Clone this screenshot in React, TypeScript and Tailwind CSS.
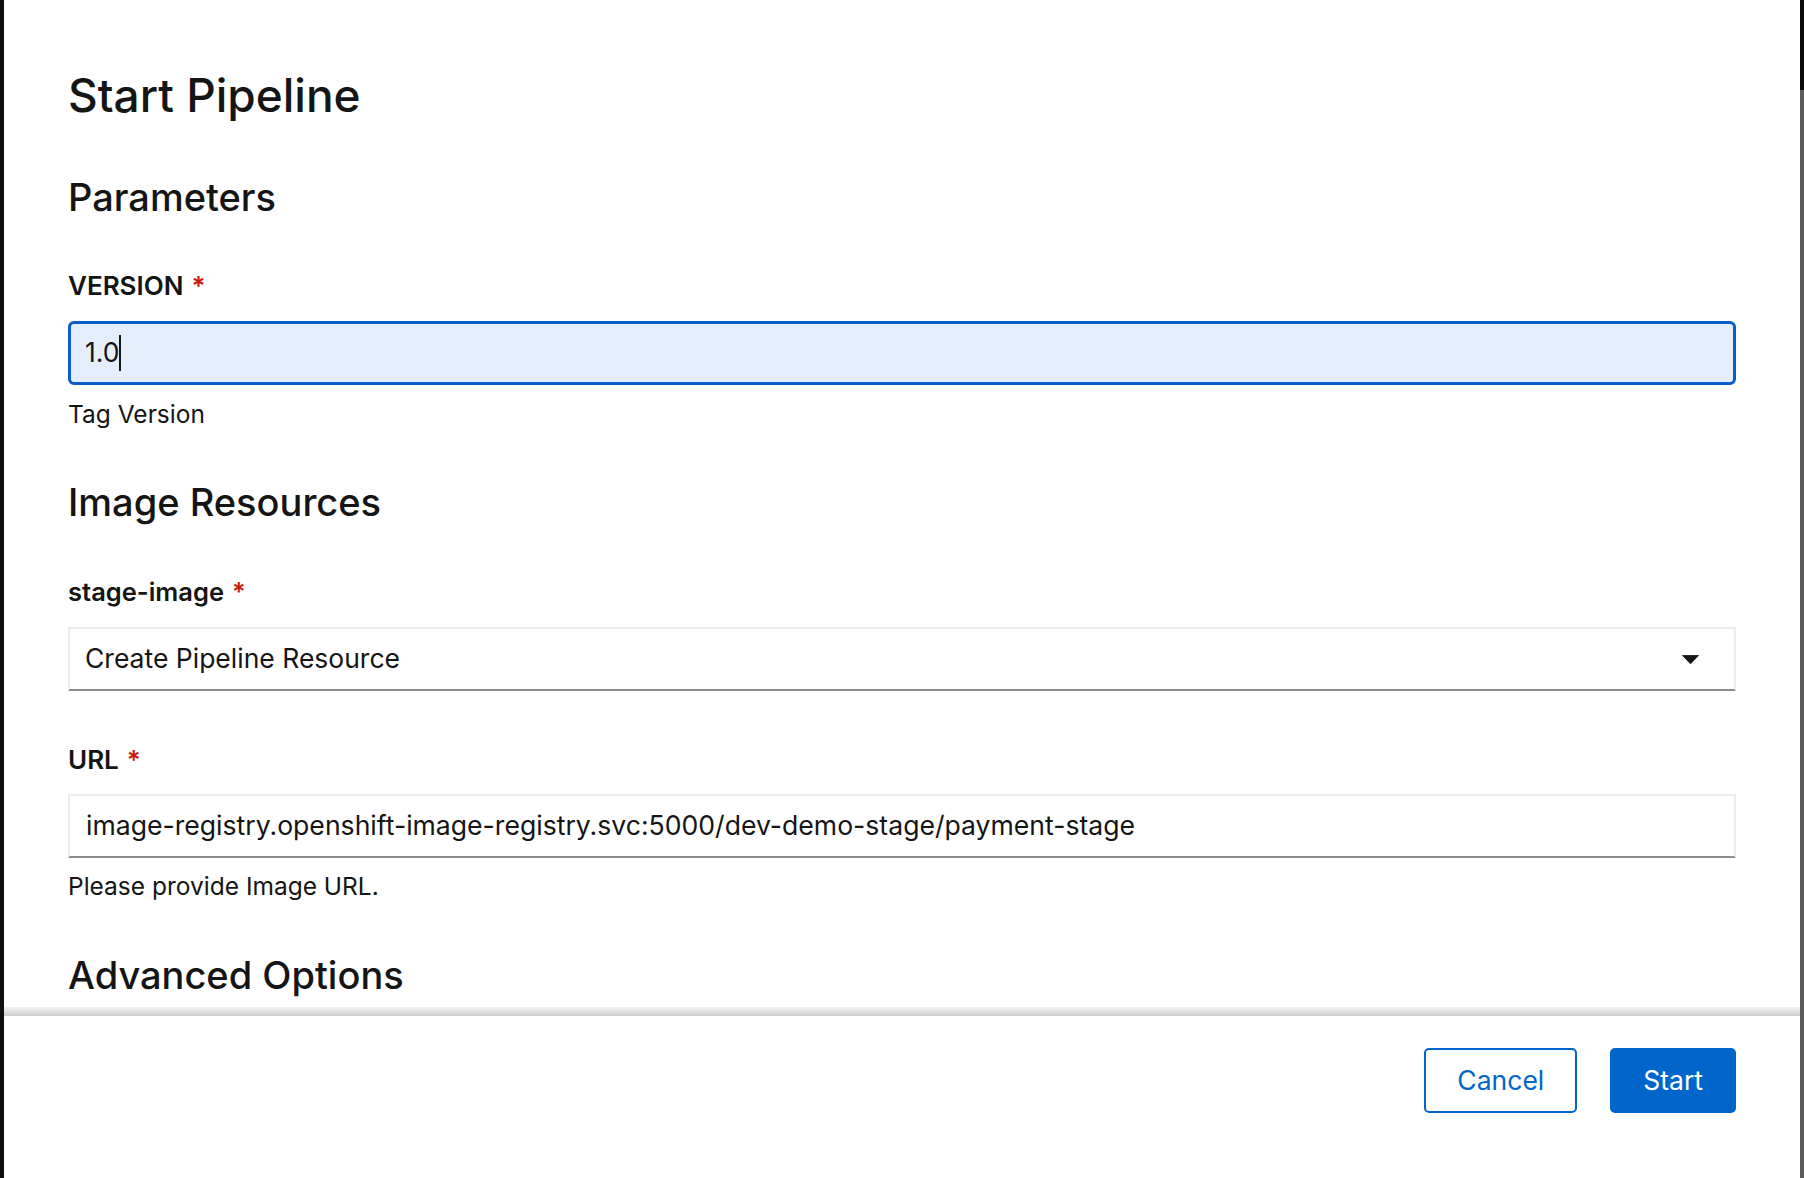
import React from "react";

function Req() {
  return <span className="ml-[8px] text-[#c9190b]">*</span>;
}

function Caret() {
  return (
    <svg width="17" height="9" viewBox="0 0 17 9" className="block">
      <path d="M0.5 0.5 H16.5 L8.5 8.8 Z" fill="#151515" stroke="#151515" strokeWidth="0.8" strokeLinejoin="round" />
    </svg>
  );
}

export default function App() {
  return (
    <div className="flex h-[1178px] w-full overflow-hidden bg-[#0f0f0f] font-['Inter',sans-serif] text-[#151515]">
      <div className="w-[4px] shrink-0 bg-[#0f0f0f]" />
      <div className="flex flex-1 flex-col bg-white">
        <div className="h-[1007px] shrink-0 overflow-hidden px-[64px] pt-[67px]">
          <h1 className="text-[46px] font-medium leading-[56px]">Start Pipeline</h1>
          <h2 className="mt-[51px] text-[38px] font-medium leading-[46px]">Parameters</h2>

          <div className="mt-[50px] text-[26px] font-semibold leading-[32px]">
            VERSION
            <Req />
          </div>
          <div className="mt-[19px] flex h-[64px] items-center rounded-[6px] border-[3px] border-[#0b5ccc] bg-[#e5eefc] pl-[14px] text-[26.5px]">
            <span>1.0</span>
            <span className="inline-block h-[36px] w-[1.5px] bg-[#151515]" />
          </div>
          <div className="mt-[14px] text-[24.5px] leading-[30px]">Tag Version</div>

          <h2 className="mt-[50px] text-[38px] font-medium leading-[46px]">Image Resources</h2>

          <div className="mt-[51px] text-[25.5px] font-semibold leading-[32px]">
            stage-image
            <Req />
          </div>
          <div className="mt-[19px] flex h-[64px] items-center justify-between border-2 border-[#ececec] border-b-[#8a8d90] pl-[15px] pr-[35px] text-[26.5px]">
            <span>Create Pipeline Resource</span>
            <Caret />
          </div>

          <div className="mt-[53px] text-[26px] font-semibold leading-[32px]">
            URL
            <Req />
          </div>
          <div className="mt-[18px] flex h-[64px] items-center border-2 border-[#ececec] border-b-[#8a8d90] pl-[16px] text-[26.6px]">
            image-registry.openshift-image-registry.svc:5000/dev-demo-stage/payment-stage
          </div>
          <div className="mt-[13px] text-[24.5px] leading-[30px]">Please provide Image URL.</div>

          <h2 className="mt-[51px] text-[38px] font-medium leading-[47px]">Advanced Options</h2>
        </div>
        <div className="h-[9px] shrink-0 bg-linear-to-b from-[#f3f3f3] to-[#cdcdcd]" />
        <div className="flex flex-1 items-start justify-end gap-[33px] pr-[64px] pt-[32px]">
          <button className="h-[65px] rounded-[5px] border-2 border-[#0066cc] bg-white px-[31px] text-[26.5px] text-[#0066cc]">
            Cancel
          </button>
          <button className="h-[65px] rounded-[5px] border-2 border-[#0066cc] bg-[#0066cc] px-[31px] text-[26.5px] text-white">
            Start
          </button>
        </div>
      </div>
      <div className="flex w-[4px] shrink-0 flex-col">
        <div className="h-[90px] bg-[#0a0a0a]" />
        <div className="flex-1 bg-[#5c5c5c]" />
      </div>
    </div>
  );
}
